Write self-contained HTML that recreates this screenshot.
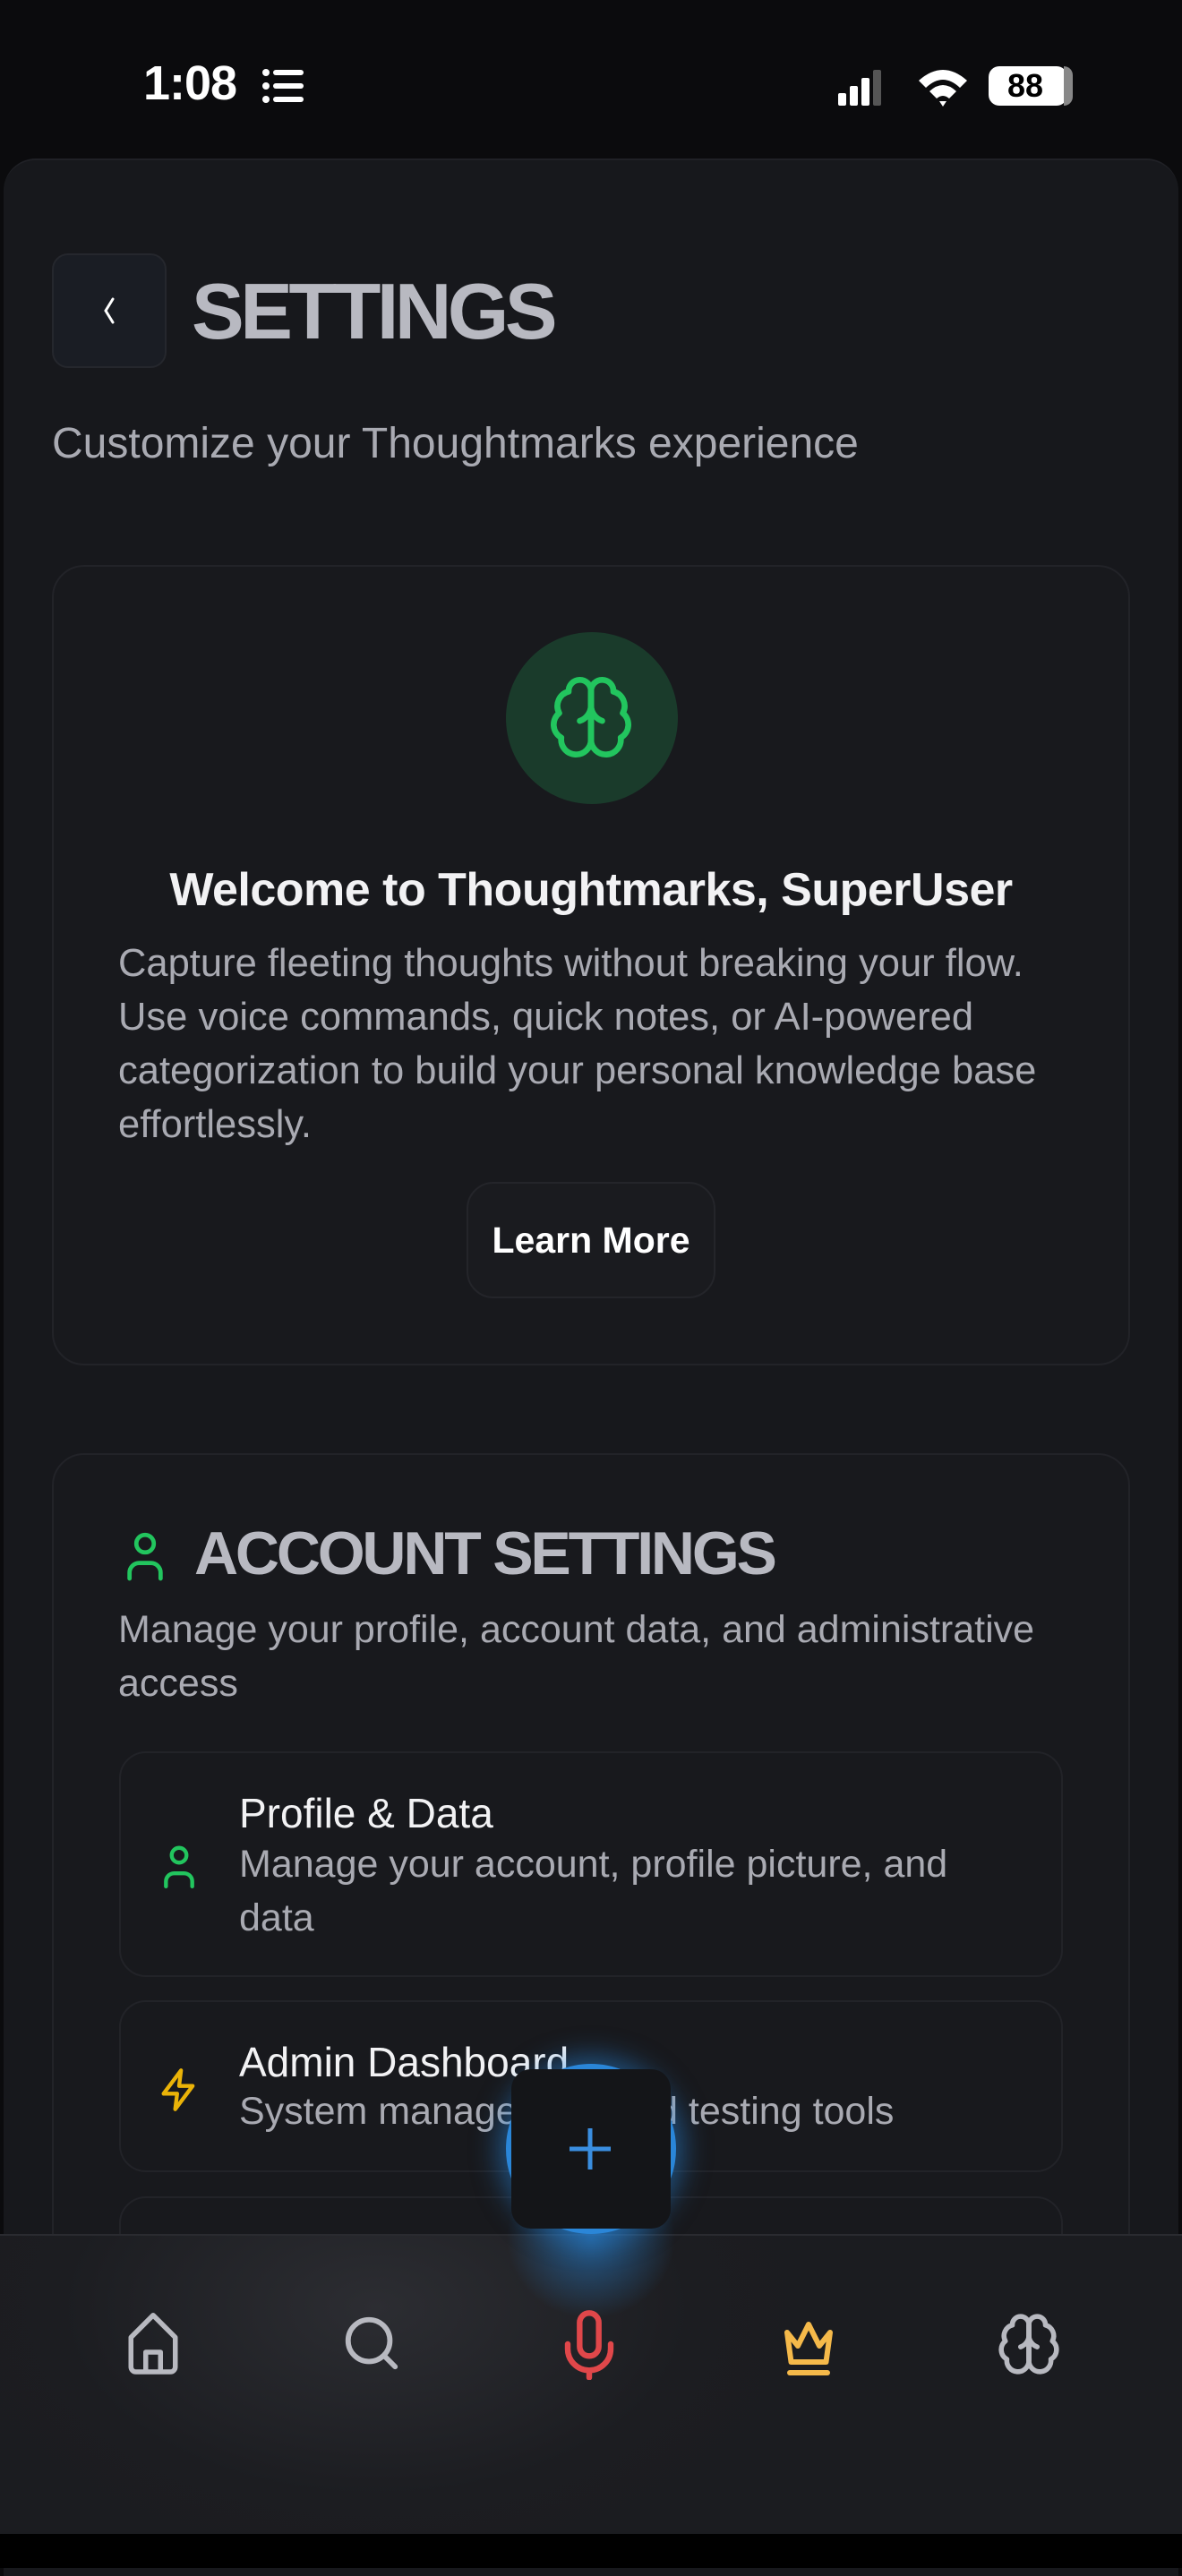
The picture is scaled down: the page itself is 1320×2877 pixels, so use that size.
<!DOCTYPE html>
<html><head><meta charset="utf-8"><style>
*{margin:0;padding:0;box-sizing:border-box}
body{width:1320px;height:2868px;background:#0b0b0d;position:relative;overflow:hidden;font-family:"Liberation Sans",sans-serif}
.abs{position:absolute}
.sheet{left:4px;top:177px;width:1312px;height:2700px;background:#17181c;border-radius:36px 36px 0 0;border-top:2px solid #202126}
.card{background:#18191d;border:2px solid #222328;border-radius:36px}
.t{color:#a9aab2;font-size:43px}
</style></head><body>
<div class="abs" style="left:160px;top:62px;color:#fff;font-weight:bold;font-size:54px;letter-spacing:-1px">1:08</div>
<svg class="abs" style="left:292px;top:76px" width="48" height="40"><g fill="#fff"><circle cx="5" cy="5" r="4"/><circle cx="5" cy="20" r="4"/><circle cx="5" cy="35" r="4"/><rect x="13" y="2" width="34" height="6" rx="3"/><rect x="13" y="17" width="34" height="6" rx="3"/><rect x="13" y="32" width="34" height="6" rx="3"/></g></svg>
<svg class="abs" style="left:934px;top:74px" width="70" height="44"><g fill="#fff"><rect x="2" y="30" width="9" height="14" rx="2"/><rect x="15" y="22" width="9" height="22" rx="2"/><rect x="28" y="13" width="9" height="31" rx="2"/><rect x="41" y="4" width="9" height="40" rx="2" fill="#555"/></g></svg>
<svg class="abs" style="left:1022px;top:72px" width="62" height="48"><path d="M4 18 Q31 -6 58 18 L50 26 Q31 8 12 26Z M16 30 Q31 16 46 30 L38 38 Q31 32 24 38Z M27 41 L31 47 L35 41Z" fill="#fff"/></svg>
<div class="abs" style="left:1104px;top:74px;width:88px;height:44px;background:#fff;border-radius:12px;color:#000;font-weight:bold;font-size:36px;text-align:center;line-height:44px;padding-right:6px">88</div>
<div class="abs" style="left:1188px;top:74px;width:10px;height:44px;background:#888;border-radius:0 12px 12px 0"></div>
<div class="abs sheet"></div>
<div class="abs" style="left:58px;top:283px;width:128px;height:128px;background:#1a1d24;border:2px solid #25272d;border-radius:18px"></div>
<svg class="abs" style="left:110px;top:330px" width="24" height="34"><path d="M16 4 L8 17 L16 30" stroke="#fff" stroke-width="3" fill="none" stroke-linecap="round"/></svg>
<div class="abs" style="left:214px;top:298px;color:#b8b9c1;font-weight:bold;font-size:88px;letter-spacing:-4.5px;line-height:100px">SETTINGS</div>
<div class="abs t" style="left:58px;top:468px;font-size:48px;color:#a9aab2">Customize your Thoughtmarks experience</div>
<div class="abs card" style="left:58px;top:631px;width:1204px;height:894px"></div>
<div class="abs" style="left:565px;top:706px;width:192px;height:192px;border-radius:50%;background:#1a3b2b"></div>
<svg class="abs" style="left:610px;top:751px" width="100" height="100" viewBox="0 0 24 24" fill="none" stroke="#22c55e" stroke-width="1.6" stroke-linecap="round" stroke-linejoin="round"><path d="M12 5a3 3 0 1 0-5.997.125 4 4 0 0 0-2.526 5.77 4 4 0 0 0 .556 6.588A4 4 0 1 0 12 18Z"/><path d="M12 5a3 3 0 1 1 5.997.125 4 4 0 0 1 2.526 5.77 4 4 0 0 1-.556 6.588A4 4 0 1 1 12 18Z"/><path d="M15 13a4.5 4.5 0 0 1-3-4 4.5 4.5 0 0 1-3 4"/><path d="M12 18V5"/></svg>
<div class="abs" style="left:58px;top:964px;width:1204px;text-align:center;color:#f2f2f4;font-weight:bold;font-size:52px;letter-spacing:-0.5px">Welcome to Thoughtmarks, SuperUser</div>
<div class="abs t" style="left:132px;top:1046px;line-height:60px;font-size:43.5px">Capture fleeting thoughts without breaking your flow.<br>Use voice commands, quick notes, or AI-powered<br>categorization to build your personal knowledge base<br>effortlessly.</div>
<div class="abs" style="left:521px;top:1320px;width:278px;height:130px;background:#1a1b1f;border:2px solid #24252a;border-radius:30px;color:#fff;font-weight:bold;font-size:41px;text-align:center;line-height:126px">Learn More</div>
<div class="abs card" style="left:58px;top:1623px;width:1204px;height:1000px"></div>
<svg class="abs" style="left:136px;top:1708px" width="52" height="58" viewBox="0 0 24 26" fill="none" stroke="#22c55e" stroke-width="2.2" stroke-linecap="round"><circle cx="12" cy="7" r="4.5"/><path d="M4 25v-3a5 5 0 0 1 5-5h6a5 5 0 0 1 5 5v3"/></svg>
<div class="abs" style="left:217px;top:1696px;color:#b8b9c1;font-weight:bold;font-size:68px;letter-spacing:-3.2px">ACCOUNT SETTINGS</div>
<div class="abs t" style="left:132px;top:1790px;line-height:60px">Manage your profile, account data, and administrative<br>access</div>
<div class="abs card" style="left:133px;top:1956px;width:1054px;height:252px;border-radius:30px"></div>
<svg class="abs" style="left:178px;top:2056px" width="44" height="54" viewBox="0 0 24 28" fill="none" stroke="#22c55e" stroke-width="2.4" stroke-linecap="round"><circle cx="12" cy="8" r="4.5"/><path d="M4 27v-3a5 5 0 0 1 5-5h6a5 5 0 0 1 5 5v3"/></svg>
<div class="abs" style="left:267px;top:1998px;color:#f2f2f4;font-size:46px">Profile &amp; Data</div>
<div class="abs t" style="left:267px;top:2052px;line-height:60px">Manage your account, profile picture, and<br>data</div>
<div class="abs card" style="left:133px;top:2234px;width:1054px;height:192px;border-radius:30px"></div>
<svg class="abs" style="left:174px;top:2304px" width="52" height="60" viewBox="0 0 24 24" fill="none" stroke="#eab308" stroke-width="2" stroke-linejoin="round"><path d="M13 2L4 14h7l-1 8 9-12h-7z"/></svg>
<div class="abs" style="left:267px;top:2276px;color:#f2f2f4;font-size:46px">Admin Dashboard</div>
<div class="abs t" style="left:267px;top:2334px">System management and testing tools</div>
<div class="abs card" style="left:133px;top:2453px;width:1054px;height:150px;border-radius:30px"></div>
<div class="abs" style="left:0;top:2495px;width:1320px;height:335px;background:radial-gradient(ellipse 500px 300px at 420px 80px,#2c2d32,#1c1d21 70%,#1b1c20);border-top:2px solid #2a2b30"></div>
<div class="abs" style="left:0;top:2830px;width:1320px;height:38px;background:#000"></div>
<div class="abs" style="left:565px;top:2410px;width:190px;height:180px;border-radius:50%;background:radial-gradient(ellipse,rgba(40,140,230,.55),rgba(40,140,230,0) 70%)"></div>
<div class="abs" style="left:565px;top:2305px;width:190px;height:190px;border-radius:50%;background:#2a86d8;box-shadow:0 0 30px 8px rgba(40,140,230,.5)"></div>
<div class="abs" style="left:571px;top:2311px;width:178px;height:178px;border-radius:22px;background:#141518"></div>
<svg class="abs" style="left:634px;top:2375px" width="50" height="50"><path d="M25 2V48M2 25H48" stroke="#3a8ee0" stroke-width="5"/></svg>
<svg class="abs" style="left:138px;top:2580px" width="66" height="72" viewBox="0 0 24 26" fill="none" stroke="#b8b9c0" stroke-width="2" stroke-linejoin="round"><path d="M3 11L12 2l9 9v12a2 2 0 0 1-2 2H5a2 2 0 0 1-2-2z"/><path d="M9 25v-8h6v8"/></svg>
<svg class="abs" style="left:380px;top:2582px" width="70" height="70" viewBox="0 0 24 24" fill="none" stroke="#b8b9c0" stroke-width="2" stroke-linecap="round"><circle cx="11" cy="11" r="8"/><path d="M21 21l-4.3-4.3"/></svg>
<svg class="abs" style="left:626px;top:2578px" width="64" height="80" viewBox="0 0 24 30" fill="none" stroke="#e0474a" stroke-width="2.4" stroke-linecap="round"><rect x="8" y="2" width="8" height="18" rx="4"/><path d="M3 15v2a9 9 0 0 0 18 0v-2M12 26v3"/></svg>
<svg class="abs" style="left:866px;top:2584px" width="74" height="72" viewBox="0 0 24 24" fill="none" stroke="#f5b94a" stroke-width="2" stroke-linejoin="round" stroke-linecap="round"><path d="M4 7l4 5 4-8 4 8 4-5-1.5 11h-13z"/><path d="M5 22h14"/></svg>
<svg class="abs" style="left:1112px;top:2578px" width="74" height="80" viewBox="0 0 24 24" fill="none" stroke="#b8b9c0" stroke-width="1.8" stroke-linecap="round" stroke-linejoin="round"><path d="M12 5a3 3 0 1 0-5.997.125 4 4 0 0 0-2.526 5.77 4 4 0 0 0 .556 6.588A4 4 0 1 0 12 18Z"/><path d="M12 5a3 3 0 1 1 5.997.125 4 4 0 0 1 2.526 5.77 4 4 0 0 1-.556 6.588A4 4 0 1 1 12 18Z"/><path d="M15 13a4.5 4.5 0 0 1-3-4 4.5 4.5 0 0 1-3 4"/><path d="M12 18V5"/></svg>
</body></html>
